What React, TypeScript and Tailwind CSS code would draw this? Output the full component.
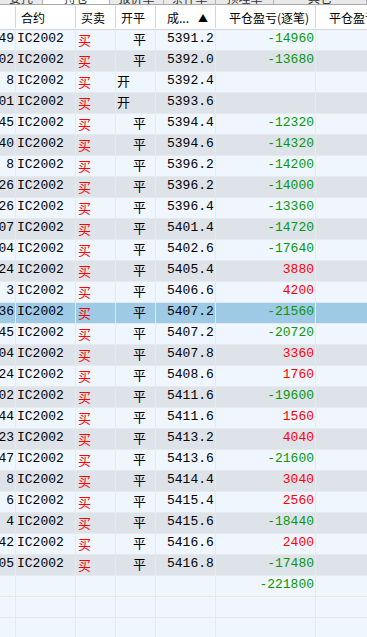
import React from "react";

type Row = { t: string; px: string; kp: "开" | "平"; pnl: string };

const rows: Row[] = [
  { t: "2:49", px: "5391.2", kp: "平", pnl: "-14960" },
  { t: "3:02", px: "5392.0", kp: "平", pnl: "-13680" },
  { t: "  8", px: "5392.4", kp: "开", pnl: "" },
  { t: "3:01", px: "5393.6", kp: "开", pnl: "" },
  { t: "2:45", px: "5394.4", kp: "平", pnl: "-12320" },
  { t: "2:40", px: "5394.6", kp: "平", pnl: "-14320" },
  { t: "  8", px: "5396.2", kp: "平", pnl: "-14200" },
  { t: "2:26", px: "5396.2", kp: "平", pnl: "-14000" },
  { t: "2:26", px: "5396.4", kp: "平", pnl: "-13360" },
  { t: "3:07", px: "5401.4", kp: "平", pnl: "-14720" },
  { t: "3:04", px: "5402.6", kp: "平", pnl: "-17640" },
  { t: "2:24", px: "5405.4", kp: "平", pnl: "3880" },
  { t: "  3", px: "5406.6", kp: "平", pnl: "4200" },
  { t: "2:36", px: "5407.2", kp: "平", pnl: "-21560" },
  { t: "2:45", px: "5407.2", kp: "平", pnl: "-20720" },
  { t: "3:04", px: "5407.8", kp: "平", pnl: "3360" },
  { t: "2:24", px: "5408.6", kp: "平", pnl: "1760" },
  { t: "3:02", px: "5411.6", kp: "平", pnl: "-19600" },
  { t: "1:44", px: "5411.6", kp: "平", pnl: "1560" },
  { t: "2:23", px: "5413.2", kp: "平", pnl: "4040" },
  { t: "1:47", px: "5413.6", kp: "平", pnl: "-21600" },
  { t: "  8", px: "5414.4", kp: "平", pnl: "3040" },
  { t: "  6", px: "5415.4", kp: "平", pnl: "2560" },
  { t: "  4", px: "5415.6", kp: "平", pnl: "-18440" },
  { t: "1:42", px: "5416.6", kp: "平", pnl: "2400" },
  { t: "3:05", px: "5416.8", kp: "平", pnl: "-17480" },
];

const SELECTED = 13;

const mono = "font-['Liberation_Mono',monospace] text-[13px] leading-[16px]";
const cjk = "font-['Noto_Sans_CJK_SC',sans-serif]";
const cell = "border-r border-[#e6eaef] overflow-hidden whitespace-pre";

function DataRow({ row, i }: { row: Row; i: number }) {
  const bg =
    i === SELECTED ? "bg-[#9ecae6]" : i % 2 === 0 ? "bg-[#eff6fe]" : "bg-[#dee3ea]";
  const neg = row.pnl.startsWith("-");
  return (
    <div
      className={`grid grid-cols-[16px_60px_40px_40px_60px_100px_51px] h-[21px] border-b border-[#e6eaef] ${bg} text-black`}
    >
      <div className={`${cell} ${mono} flex justify-end pr-[1px] pt-[1px]`}>
        <span>{row.t}</span>
      </div>
      <div className={`${cell} ${mono} pl-[1px] pt-[1px]`}>IC2002</div>
      <div className={`${cell} ${cjk} text-[13px] leading-[16px] pl-[2px] pt-[2px] text-[#ff0000]`}>
        买
      </div>
      <div
        className={`${cell} ${cjk} text-[13px] leading-[16px] pt-[1px] ${
          row.kp === "开" ? "pl-[1px]" : "pl-[17px]"
        }`}
      >
        {row.kp}
      </div>
      <div className={`${cell} ${mono} pl-[11px] pt-[1px]`}>{row.px}</div>
      <div
        className={`${cell} ${mono} text-right pr-[1px] pt-[1px] ${
          neg ? "text-[#0a960a]" : "text-[#ff0000]"
        }`}
      >
        {row.pnl}
      </div>
      <div className="" />
    </div>
  );
}

function EmptyRow({ total }: { total?: string }) {
  return (
    <div className="grid grid-cols-[16px_60px_40px_40px_60px_100px_51px] h-[21px] border-b border-[#e6eaef] bg-[#eff6fe]">
      <div className={cell} />
      <div className={cell} />
      <div className={cell} />
      <div className={cell} />
      <div className={cell} />
      <div className={`${cell} ${mono} text-right pr-[1px] pt-[1px] text-[#0a960a]`}>
        {total ?? ""}
      </div>
      <div />
    </div>
  );
}

const tabs = [
  { label: "委托", w: "w-[43px]", active: false },
  { label: "持仓", w: "w-[67px]", active: true },
  { label: "报价单", w: "w-[54px]", active: false },
  { label: "条件单", w: "w-[52px]", active: false },
  { label: "预埋单", w: "w-[58px]", active: false },
  { label: "其它", w: "w-[93px]", active: false },
];

export default function App() {
  return (
    <div className="w-[367px] h-[637px] overflow-hidden bg-[#eff6fe] select-none">
      {/* tab strip, mostly scrolled out of view */}
      <div className="flex h-[5px] overflow-hidden bg-[#e9e9e9] border-b border-[#a9a9a9]">
        {tabs.map((t) => (
          <div
            key={t.label}
            className={`${t.w} shrink-0 border-r border-[#b5b5b5] ${
              t.active ? "bg-white" : ""
            } flex items-end justify-center`}
          >
            <span className={`${cjk} text-[12px] leading-[14px] text-[#333] -mb-[1px]`}>
              {t.label}
            </span>
          </div>
        ))}
      </div>

      {/* header */}
      <div
        className={`grid grid-cols-[16px_60px_40px_40px_60px_100px_51px] h-[25px] bg-white border-b border-[#d8d8d8] ${cjk} text-[12px] leading-[16px] text-black`}
      >
        <div className="border-r border-[#d5d5d5] my-[1px]" />
        <div className="border-r border-[#d5d5d5] my-[1px] pl-[5px] pt-[4px]">合约</div>
        <div className="border-r border-[#d5d5d5] my-[1px] pl-[5px] pt-[4px]">买卖</div>
        <div className="border-r border-[#d5d5d5] my-[1px] pl-[5px] pt-[4px]">开平</div>
        <div className="border-r border-[#d5d5d5] my-[1px] pl-[11px] pt-[4px] flex items-start">
          <span>成...</span>
          <span className="ml-[9px] text-[10px] leading-[16px]">▲</span>
        </div>
        <div className="border-r border-[#d5d5d5] my-[1px] pl-[13px] pt-[4px] whitespace-nowrap">
          平仓盈亏(逐笔)
        </div>
        <div className="my-[1px] pl-[13px] pt-[4px] whitespace-nowrap overflow-hidden">
          平仓盈亏
        </div>
      </div>

      {rows.map((r, i) => (
        <DataRow key={i} row={r} i={i} />
      ))}
      <EmptyRow total="-221800" />
      <EmptyRow />
      <EmptyRow />
    </div>
  );
}
